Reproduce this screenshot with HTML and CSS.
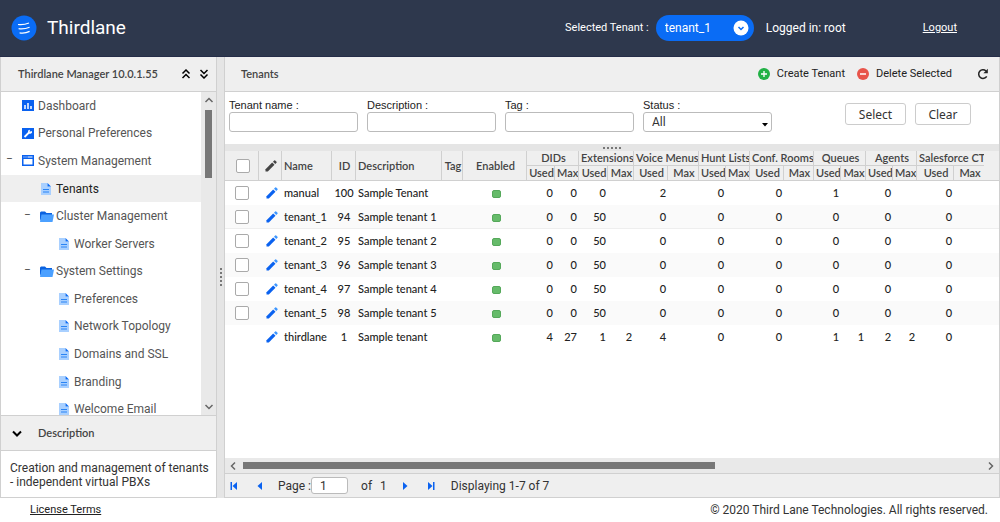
FILE: index.html
```html
<!DOCTYPE html>
<html lang="en">
<head>
<meta charset="utf-8">
<title>Thirdlane</title>
<link rel="stylesheet" href="styles.css">
</head>
<body>
<svg class="defs" aria-hidden="true">
  <symbol id="doc" viewBox="0 0 10 12"><path d="M0 0h6.5v3.500H10V12H0z" fill="#a9d0ff"/><path d="M6.500 0L10 3.500H6.500z" fill="#0a6cf5"/><path d="M2 6.500h6M2 9h6" stroke="#2a84f5"/></symbol>
  <symbol id="folder" viewBox="0 0 14 11"><path d="M0 10V1.500L1 .5h4L6.500 2H12v2H3z" fill="#0a62e0"/><path d="M1.500 3.500H14L12.500 11H0z" fill="#4ba0ff"/></symbol>
  <symbol id="pencil" viewBox="0 0 12 12"><path d="M.5 11.500V9.200l6.700-6.700 2.300 2.300-6.700 6.700z" fill="currentColor"/><path d="M8 1.700L9.200.5q.5-.4 1 0l1.300 1.300q.4.500 0 1L10.300 4z" class="tip"/></symbol>
</svg>
<header class="topbar">
  <svg class="logo" viewBox="0 0 26 26" aria-hidden="true"><circle cx="13" cy="13" r="12.500" fill="#0a6cf5"/><path d="M7 9.500q5.500.8 11-1.500M7.600 13.700q5.500.8 11-1.500M8.600 17.900q5.500.8 10-1.500" fill="none" stroke="#fff" stroke-width="1.200"/></svg>
  <h1>Thirdlane</h1>
  <label for="tenant">Selected Tenant :</label>
  <span class="pill"><select id="tenant"><option>tenant_1</option></select>
    <svg viewBox="0 0 16 16" aria-hidden="true"><circle cx="8" cy="8" r="7.500" fill="#fff"/><path d="M5.500 7L8 9.500 10.500 7" fill="none" stroke="#0a6cf5" stroke-width="1.500"/></svg></span>
  <span class="user">Logged in: root</span>
  <a class="logout" href="#">Logout</a>
</header>
<div class="work">
  <aside class="sidebar">
    <div class="bar side-head"><h2>Thirdlane Manager 10.0.1.55</h2>
      <button aria-label="Collapse all"><svg width="10" height="10" viewBox="0 0 10 10"><path d="M1.500 4.500L5 1l3.500 3.500M1.500 9L5 5.500 8.500 9"/></svg></button>
      <button aria-label="Expand all"><svg width="10" height="10" viewBox="0 0 10 10"><path d="M1.500 1L5 4.500 8.500 1M1.500 5.500L5 9l3.500-3.500"/></svg></button>
    </div>
    <div class="tree-wrap">
      <ul class="tree">
        <li class="l1"><i></i><svg viewBox="0 0 12 11"><path d="M0 0h12v11H0z" fill="#0a62f0"/><path d="M3 5v4M6 3v6M9 6v3" stroke="#fff" stroke-width="1.500"/></svg>Dashboard</li>
        <li class="l1"><i></i><svg viewBox="0 0 12 11"><path d="M0 0h12v11H0z" fill="#0a62f0"/><path d="M2.500 9L7 4.500" stroke="#fff" stroke-width="1.800"/><path d="M9.800 3A2 2 0 1 1 8 1.800L7.600 3.700z" fill="#fff"/></svg>Personal Preferences</li>
        <li class="l1"><i>−</i><svg viewBox="0 0 12 11"><path d="M0 0h12v11H0z" fill="#0a62f0"/><path d="M1.500 4h9v5.500h-9z" fill="#fff"/><path d="M1.500 2h1M3.500 2h1M5.500 2h5" stroke="#fff"/></svg>System Management</li>
        <li class="l2 on"><i></i><svg class="doc"><use href="#doc"/></svg>Tenants</li>
        <li class="l2"><i>−</i><svg class="folder"><use href="#folder"/></svg>Cluster Management</li>
        <li class="l3"><i></i><svg class="doc"><use href="#doc"/></svg>Worker Servers</li>
        <li class="l2"><i>−</i><svg class="folder"><use href="#folder"/></svg>System Settings</li>
        <li class="l3"><i></i><svg class="doc"><use href="#doc"/></svg>Preferences</li>
        <li class="l3"><i></i><svg class="doc"><use href="#doc"/></svg>Network Topology</li>
        <li class="l3"><i></i><svg class="doc"><use href="#doc"/></svg>Domains and SSL</li>
        <li class="l3"><i></i><svg class="doc"><use href="#doc"/></svg>Branding</li>
        <li class="l3"><i></i><svg class="doc"><use href="#doc"/></svg>Welcome Email</li>
      </ul>
      <div class="vscroll">
        <svg width="10" height="6" viewBox="0 0 10 6"><path d="M1.500 5L5 1.500 8.500 5"/></svg>
        <span></span>
        <svg width="10" height="6" viewBox="0 0 10 6"><path d="M1.500 1L5 4.500 8.500 1"/></svg>
      </div>
    </div>
    <div class="bar desc-head"><button aria-label="Toggle description"><svg width="10" height="7" viewBox="0 0 10 7"><path d="M1 1.500l4 4 4-4"/></svg></button><h2>Description</h2></div>
    <p class="desc">Creation and management of tenants - independent virtual PBXs</p>
  </aside>
  <div class="splitter"><span></span></div>
  <main class="main">
    <div class="bar main-head"><h2>Tenants</h2>
      <button><svg width="12" height="12" viewBox="0 0 12 12"><circle cx="6" cy="6" r="6" fill="#21b145"/><path d="M6 3v6M3 6h6" stroke="#fff" stroke-width="1.300"/></svg>Create Tenant</button>
      <button><svg width="12" height="12" viewBox="0 0 12 12"><circle cx="6" cy="6" r="6" fill="#e8544a"/><path d="M3 6h6" stroke="#fff" stroke-width="1.500"/></svg>Delete Selected</button>
      <button class="reload" aria-label="Reload"><svg width="12" height="12" viewBox="0 0 12 12"><path d="M9.700 8.300A4.300 4.300 0 1 1 9 3" fill="none" stroke="#222" stroke-width="1.500"/><path d="M10.800.8v4.400H6.400z" fill="#222"/></svg></button>
    </div>
    <form class="filters">
      <div class="field"><label for="f1">Tenant name :</label><input id="f1" type="text"></div>
      <div class="field"><label for="f2">Description :</label><input id="f2" type="text"></div>
      <div class="field"><label for="f3">Tag :</label><input id="f3" type="text"></div>
      <div class="field"><label for="f4">Status :</label><span class="sel"><select id="f4"><option>All</option></select><svg width="6" height="4" viewBox="0 0 6 4"><path d="M0 0h6L3 3.500z"/></svg></span></div>
      <div class="actions"><button type="button">Select</button><button type="button">Clear</button></div>
    </form>
    <div class="hsplit"><span></span></div>
    <div class="grid">
      <table>
        <colgroup><col class="w34"><col class="w23"><col class="w50"><col class="w24"><col class="w86"><col class="w21"><col class="w64"><col class="w28"><col class="w24"><col class="w29"><col class="w26"><col class="w34"><col class="w31"><col class="w27"><col class="w24"><col class="w34"><col class="w30"><col class="w27"><col class="w25"><col class="w27"><col class="w24"><col class="w37"><col class="w30"><col></colgroup>
        <thead>
          <tr><th rowspan="2"><input type="checkbox" aria-label="Select all"></th><th rowspan="2" class="edit"><svg class="pen"><use href="#pencil"/></svg></th><th rowspan="2" class="t">Name</th><th rowspan="2">ID</th><th rowspan="2" class="t">Description</th><th rowspan="2">Tag</th><th rowspan="2">Enabled</th><th colspan="2">DIDs</th><th colspan="2">Extensions</th><th colspan="2">Voice Menus</th><th colspan="2">Hunt Lists</th><th colspan="2">Conf. Rooms</th><th colspan="2">Queues</th><th colspan="2">Agents</th><th colspan="2" class="last">Salesforce CT</th><th rowspan="2" class="last"></th></tr>
          <tr class="sub"><th>Used</th><th>Max</th><th>Used</th><th>Max</th><th>Used</th><th>Max</th><th>Used</th><th>Max</th><th>Used</th><th>Max</th><th>Used</th><th>Max</th><th>Used</th><th>Max</th><th>Used</th><th class="last">Max</th></tr>
        </thead>
        <tbody>
          <tr><td class="c"><input type="checkbox" aria-label="manual"></td><td class="c edit"><svg class="pen"><use href="#pencil"/></svg></td><td class="t">manual</td><td class="id">100</td><td class="t">Sample Tenant</td><td></td><td class="c on"><b></b></td><td>0</td><td>0</td><td>0</td><td></td><td>2</td><td></td><td>0</td><td></td><td>0</td><td></td><td>1</td><td></td><td>0</td><td></td><td>0</td><td></td><td></td></tr>
          <tr><td class="c"><input type="checkbox" aria-label="tenant_1"></td><td class="c edit"><svg class="pen"><use href="#pencil"/></svg></td><td class="t">tenant_1</td><td class="id">94</td><td class="t">Sample tenant 1</td><td></td><td class="c on"><b></b></td><td>0</td><td>0</td><td>50</td><td></td><td>0</td><td></td><td>0</td><td></td><td>0</td><td></td><td>0</td><td></td><td>0</td><td></td><td>0</td><td></td><td></td></tr>
          <tr><td class="c"><input type="checkbox" aria-label="tenant_2"></td><td class="c edit"><svg class="pen"><use href="#pencil"/></svg></td><td class="t">tenant_2</td><td class="id">95</td><td class="t">Sample tenant 2</td><td></td><td class="c on"><b></b></td><td>0</td><td>0</td><td>50</td><td></td><td>0</td><td></td><td>0</td><td></td><td>0</td><td></td><td>0</td><td></td><td>0</td><td></td><td>0</td><td></td><td></td></tr>
          <tr><td class="c"><input type="checkbox" aria-label="tenant_3"></td><td class="c edit"><svg class="pen"><use href="#pencil"/></svg></td><td class="t">tenant_3</td><td class="id">96</td><td class="t">Sample tenant 3</td><td></td><td class="c on"><b></b></td><td>0</td><td>0</td><td>50</td><td></td><td>0</td><td></td><td>0</td><td></td><td>0</td><td></td><td>0</td><td></td><td>0</td><td></td><td>0</td><td></td><td></td></tr>
          <tr><td class="c"><input type="checkbox" aria-label="tenant_4"></td><td class="c edit"><svg class="pen"><use href="#pencil"/></svg></td><td class="t">tenant_4</td><td class="id">97</td><td class="t">Sample tenant 4</td><td></td><td class="c on"><b></b></td><td>0</td><td>0</td><td>50</td><td></td><td>0</td><td></td><td>0</td><td></td><td>0</td><td></td><td>0</td><td></td><td>0</td><td></td><td>0</td><td></td><td></td></tr>
          <tr><td class="c"><input type="checkbox" aria-label="tenant_5"></td><td class="c edit"><svg class="pen"><use href="#pencil"/></svg></td><td class="t">tenant_5</td><td class="id">98</td><td class="t">Sample tenant 5</td><td></td><td class="c on"><b></b></td><td>0</td><td>0</td><td>50</td><td></td><td>0</td><td></td><td>0</td><td></td><td>0</td><td></td><td>0</td><td></td><td>0</td><td></td><td>0</td><td></td><td></td></tr>
          <tr><td></td><td class="c edit"><svg class="pen"><use href="#pencil"/></svg></td><td class="t">thirdlane</td><td class="id">1</td><td class="t">Sample tenant</td><td></td><td class="c on"><b></b></td><td>4</td><td>27</td><td>1</td><td>2</td><td>4</td><td></td><td>0</td><td></td><td>0</td><td></td><td>1</td><td>1</td><td>2</td><td>2</td><td>0</td><td></td><td></td></tr>
        </tbody>
      </table>
    </div>
    <div class="hscroll"><svg width="6" height="10" viewBox="0 0 6 10"><path d="M5 1.500L1.500 5 5 8.500"/></svg><div><span></span></div><svg width="6" height="10" viewBox="0 0 6 10"><path d="M1 1.500L4.500 5 1 8.500"/></svg></div>
    <nav class="pager">
      <button aria-label="First page"><svg width="8" height="8" viewBox="0 0 8 8"><path d="M.5 0H2v8H.5zM7 0v8L2.500 4z"/></svg></button>
      <button aria-label="Previous page"><svg width="8" height="8" viewBox="0 0 8 8"><path d="M6 0v8L1.500 4z"/></svg></button>
      <label for="page">Page :</label><input id="page" type="text" value="1">
      <span class="of">of</span><span class="total">1</span>
      <button aria-label="Next page"><svg width="8" height="8" viewBox="0 0 8 8"><path d="M2 0v8l4.500-4z"/></svg></button>
      <button aria-label="Last page"><svg width="8" height="8" viewBox="0 0 8 8"><path d="M1 0v8l4.500-4zM6 0h1.500v8H6z"/></svg></button>
      <span class="shown">Displaying 1-7 of 7</span>
    </nav>
  </main>
</div>
<footer class="foot"><a href="#">License Terms</a><span>© 2020 Third Lane Technologies. All rights reserved.</span></footer>
</body>
</html>
```
FILE: styles.css
```css
* { box-sizing: border-box; }
body { margin: 0; height: 100vh; display: flex; flex-direction: column; overflow: hidden; font: 12px/14px Roboto, sans-serif; color: #333; background: #fff; }
button { border: 0; padding: 0; background: none; font: inherit; color: inherit; display: flex; align-items: center; }
h1, h2, p, ul { margin: 0; padding: 0; }
svg { flex: none; }
.defs { position: absolute; width: 0; height: 0; }

.topbar { height: 57px; flex: none; display: flex; align-items: center; padding: 0 43px 0 11px; background: #2e384d; border-bottom: 1px solid #252d48; color: #fff; }
.logo { width: 26px; height: 26px; }
.topbar h1 { font-size: 19px; line-height: 24px; font-weight: 400; margin: 0 auto 0 10px; }
.topbar label { margin-right: 7px; font-size: 11px; }
.pill { position: relative; margin-right: 12px; }
.pill select { display: block; width: 98px; height: 26px; border: 0; border-radius: 13px; padding: 0 9px; appearance: none; background: #0a6cf5; color: #fff; font: 12px Roboto, sans-serif; }
.pill svg { position: absolute; right: 5px; top: 5px; width: 16px; height: 16px; }
.user { margin-right: 77px; }
.logout { color: #fff; font-size: 11px; }

.work { flex: 1; min-height: 0; display: flex; background: #e5e5e5; }
.bar { height: 35px; flex: none; display: flex; align-items: center; background: #efefef; border-bottom: 1px solid #d0d0d0; }
.bar h2 { font: 600 11px/14px Lato, sans-serif; color: #444; }

.sidebar { width: 217px; flex: none; display: flex; flex-direction: column; background: #fff; border: 1px solid #d0d0d0; border-top: 0; }
.side-head { padding: 0 7px 0 17px; gap: 8px; }
.side-head h2 { margin-right: auto; }
.side-head svg, .desc-head svg { fill: none; stroke: #000; stroke-width: 2; }
.side-head svg { stroke-width: 1.5; }
.tree-wrap { flex: 1; min-height: 0; display: flex; overflow: hidden; }
.tree { flex: 1; height: calc(100% + 8px); display: flex; flex-direction: column; list-style: none; font-size: 12px; line-height: 16px; color: #555; }
.tree li { flex: 1; display: flex; align-items: center; gap: 4px; }
.tree i { width: 12px; font-style: normal; line-height: 14px; padding-bottom: 3px; }
.tree svg { width: 12px; height: 11px; }
.tree .doc { width: 10px; height: 12px; margin: 0 1px; }
.tree .folder { width: 14px; margin-right: -2px; }
.l1 { padding-left: 5px; }
.l2 { padding-left: 23px; }
.l3 { padding-left: 41px; }
.tree .on { background: #efefef; color: #222; }
.vscroll { width: 15px; background: #e9e9e9; display: flex; flex-direction: column; align-items: center; padding: 5px 0; }
.vscroll svg, .hscroll svg { fill: none; stroke: #666; stroke-width: 1.5; }
.vscroll span { width: 7px; height: 68px; margin: 7px 0 auto; background: #777; }
.desc-head { border-top: 1px solid #d0d0d0; padding-left: 11px; gap: 16px; height: 36px; }
.desc { height: 46px; padding: 10px 4px 8px 9px; font-size: 12px; }

.splitter { width: 7px; display: flex; align-items: center; justify-content: center; }
.splitter span { width: 2px; height: 19px; background: repeating-linear-gradient(#777 0 2px, transparent 2px 4px); }

.main { flex: 1; min-width: 0; display: flex; flex-direction: column; background: #fff; border: 1px solid #d0d0d0; border-top: 0; }
.main-head { padding: 0 10px 0 16px; gap: 12px; color: #222; }
.main-head h2 { margin-right: auto; }
.main-head button { gap: 7px; font-size: 11px; }
.main-head .reload { margin-left: 13px; }
.filters { height: 52px; flex: none; display: flex; gap: 9px; padding: 7px 28px 0 4px; }
.field { width: 129px; }
.field label { display: block; font-size: 11px; line-height: 13px; font-family: "Liberation Sans", sans-serif; color: #222; }
.field input, .sel select, .pager input { display: block; width: 100%; height: 20px; border: 1px solid #bbb; border-radius: 3px; background: #fff; padding: 0 8px; font: 12px Roboto, sans-serif; color: #333; appearance: none; }
.sel { position: relative; display: block; }
.sel svg { position: absolute; right: 4px; top: 11px; }
.actions { margin-left: auto; display: flex; gap: 9px; padding-top: 4px; }
.actions button { height: 22px; border: 1px solid #ccc; border-radius: 3px; background: #fff; justify-content: center; font: 12px "Noto Sans", sans-serif; width: 61px; }
.actions button + button { width: 56px; }
.hsplit { height: 7px; flex: none; background: #e5e5e5; display: flex; align-items: center; justify-content: center; }
.hsplit span { width: 19px; height: 2px; background: repeating-linear-gradient(90deg, #777 0 2px, transparent 2px 4px); }

.grid { flex: 1; min-height: 0; overflow: hidden; }
table { width: 100%; table-layout: fixed; border-collapse: separate; border-spacing: 0; font: 500 11px/14px Lato, sans-serif; color: #222; white-space: nowrap; }
th, td { padding: 0; overflow: hidden; }
th { background: #efefef; border-right: 1px solid #d0d0d0; border-bottom: 1px solid #d0d0d0; font-weight: 600; color: #444; height: 15px; padding-left: 2px; }
th.last { border-right: 0; }
.sub th { height: 15px; }
th.t, td.t { text-align: left; padding-left: 2px; }
td { height: 24px; text-align: right; padding-right: 2px; }
td.c, td.id { text-align: center; padding-right: 0; }
td.on, td.edit, th.edit { padding-left: 2px; }
tbody tr:nth-child(even) { background: #fafafa; }
tbody tr:nth-child(2) td { border-bottom: 1px solid #eee; }
td b { display: inline-block; width: 9px; height: 8px; border-radius: 2px; background: #66bb6a; border: 1px solid #55a85a; vertical-align: middle; }
table input { appearance: none; display: block; width: 14px; height: 14px; margin: 0 auto; border: 1px solid #aaa; border-radius: 2px; background: #fff; }
.pen { display: block; width: 12px; height: 12px; margin: 0 auto; color: #0a62f0; fill: #3c96ff; }
th .pen { color: #444; fill: #444; }
.w21 { width: 21px; } .w23 { width: 23px; } .w24 { width: 24px; } .w25 { width: 25px; } .w26 { width: 26px; } .w27 { width: 27px; } .w28 { width: 28px; } .w29 { width: 29px; } .w30 { width: 30px; } .w31 { width: 31px; } .w34 { width: 34px; } .w37 { width: 37px; } .w50 { width: 50px; } .w64 { width: 64px; } .w86 { width: 86px; }

.hscroll { height: 16px; flex: none; display: flex; align-items: center; gap: 7px; padding: 0 5px; background: #e9e9e9; border-bottom: 1px solid #d0d0d0; }
.hscroll div { flex: 1; }
.hscroll span { display: block; width: 64%; height: 7px; background: #777; }
.pager { height: 23px; flex: none; display: flex; align-items: center; padding: 0 5px; background: #efefef; }
.pager svg { fill: #0a62f0; }
.pager button + button { margin-left: 18px; }
.pager label { margin-left: 14px; }
.pager input { width: 37px; height: 17px; }
.of { margin-left: 13px; }
.total { margin: 0 14px 0 8px; }
.shown { margin-left: 16px; }
.foot { height: 24px; flex: none; display: flex; align-items: center; justify-content: space-between; padding: 0 12px 0 30px; }
.foot a { color: #222; font-size: 11px; }
```
